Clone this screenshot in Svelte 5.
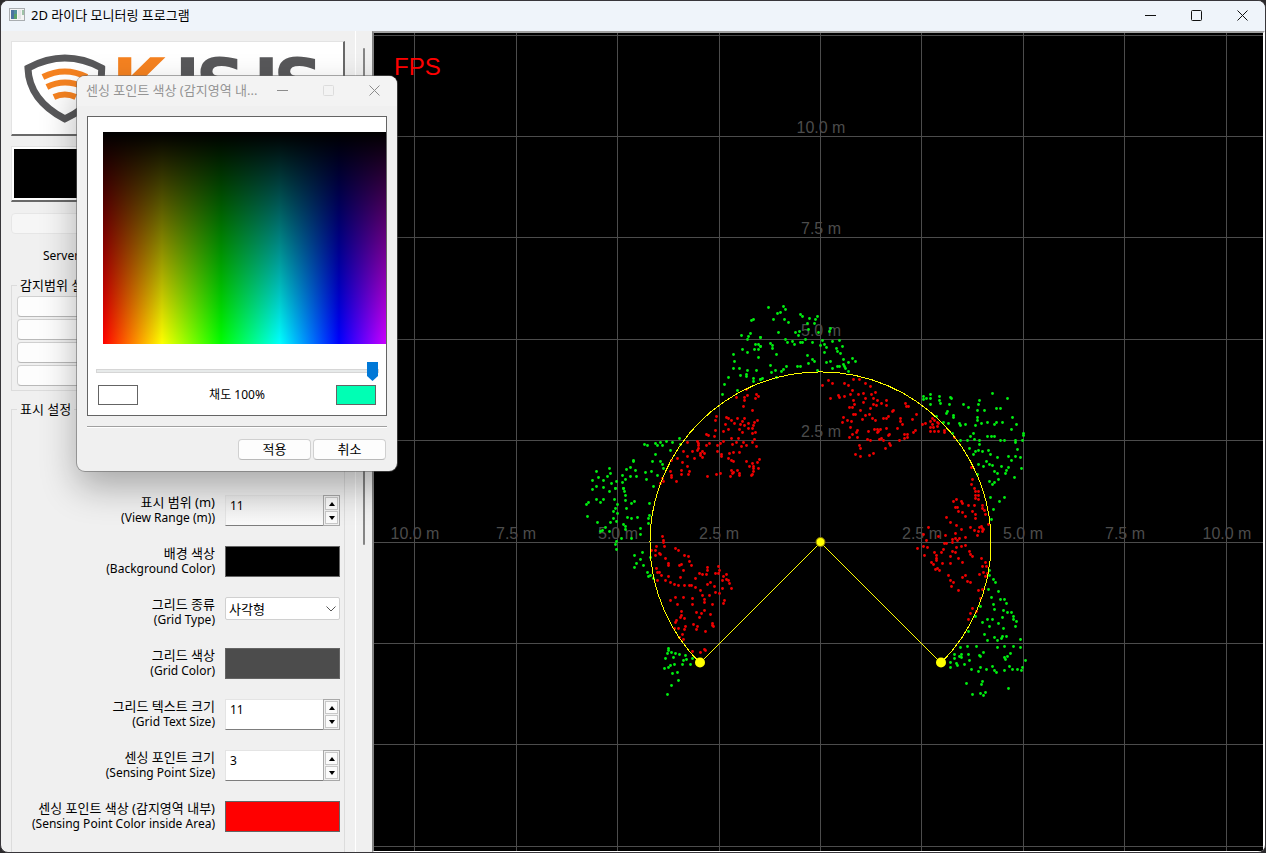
<script>
  // Scan samples: each sector lists "x,y" pairs in thirds of a pixel from its origin.
  const sectors = [
    {
      x: 570, y: 290,
      outside: '545,91 551,87 515,137 534,138 540,131 531,149 571,143 517,179 531,188 557,163 565,162 552,179 565,177 572,170 566,201 491,194 494,214 491,236 507,234 533,241 558,241 511,257 528,252 528,259 475,263 463,283 457,312 503,302 549,266 550,275 571,269 577,265 327,444 332,463 306,456 288,454 270,456 257,459 262,465 277,467 302,480 222,464 233,466 256,493 246,514 272,514 278,522 281,536 263,556 190,510 190,515 180,532 196,542 168,538 225,547 244,545 157,556 181,560 200,560 229,567 166,568 158,577 138,573 125,580 118,535 120,550 111,559 79,545 86,562 99,570 66,572 79,590 99,592 136,594 159,594 249,590',
      inside: '529,298 558,314 564,320 555,326 499,323 522,321 533,317 524,331 521,350 546,362 440,378 435,392 469,382 475,384 501,386 522,385 485,392 494,400 516,394 563,390 467,404 510,404 524,406 536,399 552,397 551,405 476,419 509,417 536,414 547,414 459,423 435,421 518,426 557,426 547,430 409,433 416,436 432,440 485,446 505,444 554,448 352,456 383,453 384,460 386,467 386,474 410,466 419,459 441,467 452,461 460,454 486,462 500,458 521,457 546,457 513,469 529,465 560,469 339,484 367,485 383,482 397,484 403,491 391,496 396,502 390,490 443,483 453,493 454,500 478,491 489,486 509,486 323,506 353,500 373,504 304,512 337,518 474,506 485,510 489,515 529,513 567,509 563,518 548,520 538,528 549,528 351,530 333,540 357,543 301,543 303,555 304,562 333,553 354,552 452,549 438,554 411,559 484,541 491,547 502,541 487,549 508,549 508,556 482,559 550,536 565,536 550,545 548,552 545,557 319,574 278,566 280,574 272,581'
    },
    {
      x: 570, y: 480,
      outside: '68,29 117,33 163,34 137,24 160,24 165,47 79,57 100,57 132,57 165,60 56,67 50,74 91,67 141,72 194,64 183,71 239,71 170,84 137,85 131,94 143,99 51,108 129,114 173,112 183,116 201,113 239,106 235,115 236,131 83,126 122,126 138,124 161,134 165,140 107,141 98,150 90,155 119,153 212,146 212,162 166,149 155,176 183,174 138,184 137,192 140,208 194,226 217,216 210,237 198,251 194,262 221,255 240,231 231,277 241,286 234,290 251,295 294,504 295,512 303,516 291,521 315,521 328,524 286,535 310,532 347,527 348,537 340,540 366,534 361,553 336,552 313,552 300,555 296,562 284,565 307,581 321,577 324,600 304,616 291,642',
      inside: '277,168 279,180 281,187 284,200 258,199 245,210 257,211 267,219 272,223 256,227 287,235 315,204 325,212 343,227 355,229 359,244 364,255 295,249 295,256 329,257 335,253 340,271 260,266 261,277 267,278 274,287 295,288 262,300 286,300 301,307 313,313 326,317 343,316 331,292 357,317 364,317 377,321 377,296 389,281 397,283 409,283 412,263 412,272 446,259 448,270 435,281 446,281 460,290 468,284 458,301 470,298 475,302 478,311 484,324 458,324 420,307 413,314 432,320 390,332 437,336 449,340 397,346 417,347 404,357 404,367 462,360 461,370 366,355 340,351 317,353 302,361 322,372 366,374 427,373 403,390 394,399 378,398 387,412 420,404 335,395 335,405 332,413 342,416 320,420 316,428 369,434 383,439 379,447 427,430 427,436 431,440 313,444 326,446 345,440 343,449 336,462 328,471 340,478 406,454 390,518 366,514 402,509 407,512'
    },
    {
      x: 760, y: 290,
      outside: '26,52 71,49 76,58 52,70 61,67 41,89 74,89 86,98 122,72 126,78 148,84 172,80 166,88 142,100 163,100 146,119 56,128 107,128 119,125 115,137 176,128 207,123 212,115 2,143 2,170 77,147 81,157 97,153 102,164 30,160 37,165 37,175 120,157 126,156 135,148 157,157 186,150 192,162 180,167 198,171 218,155 237,150 194,187 229,175 231,183 247,170 242,189 48,192 141,195 146,219 157,209 163,213 199,218 211,214 249,208 276,205 287,214 265,216 250,222 255,234 254,230 232,230 216,234 238,228 264,243 171,240 113,228 122,229 31,227 35,246 46,241 65,243 71,239 80,230 50,261 2,269',
      inside: '205,270 187,287 217,281 281,267 297,269 253,280 265,287 316,280 330,288 276,302 270,312 254,320 234,316 239,323 211,324 296,314 310,311 335,312 345,306 315,324 341,324 280,331 310,337 353,331 379,331 341,343 350,346 363,340 379,346 282,344 268,353 277,353 300,360 331,356 279,373 286,372 315,375 327,374 397,365 401,360 336,386 346,390 306,388 371,386 380,386 385,380 420,386 420,394 428,404 251,383 262,391 274,393 247,397 272,412 277,432 288,426 293,421 268,443 293,443 324,423 342,418 351,418 361,419 351,427 354,424 380,414 412,415 384,436 389,432 433,434 441,433 441,441 433,444 418,450 322,447 331,452 358,448 365,445 370,450 387,459 391,466 375,474 297,467 300,476 285,492 300,498 329,495 339,491 437,341 438,349 446,350'
    },
    {
      x: 900, y: 370,
      outside: '277,70 90,72 70,79 78,84 71,88 90,86 118,78 117,90 120,99 90,103 150,83 155,84 147,103 190,103 204,111 239,90 234,103 322,84 290,114 301,114 232,122 252,122 142,124 139,129 161,136 161,142 337,141 110,140 232,141 233,151 129,158 145,161 179,161 182,165 197,162 243,161 261,156 284,163 290,157 306,157 348,164 334,177 225,167 158,190 220,189 370,189 370,197 210,199 261,198 274,198 283,200 224,208 180,211 201,210 237,210 302,211 314,211 345,210 347,217 368,211 237,224 207,235 352,237 265,241 247,245 227,243 236,241 270,254 221,253 293,262 326,260 345,259 362,262 335,271 260,274 235,283 268,283 276,287 249,289 305,290 326,292 363,294 284,305 292,310 319,301 315,310 232,312 342,323 294,327 267,333 284,336 278,342 270,382 314,383 297,395 281,419 273,448',
      inside: '50,134 36,149 68,162 77,161 98,146 102,151 91,155 112,158 115,161 98,162 112,169 101,172 90,171 91,184 102,184 114,183 134,180 134,186 45,180 41,187 163,201 213,291 217,329 213,344 224,354 225,365 236,364 227,377 235,377 227,386 236,387 168,389 184,393 187,400 159,395 206,406 223,407 247,405 165,411 172,412 248,414 253,422 217,423 227,432 256,434 175,424 188,427 197,439 139,441 225,444 152,458 169,466 266,463 211,471 239,472 245,469 246,476 250,479 85,471 185,479 222,482 236,485 248,485 165,490 136,496 233,496 195,502 167,504 116,499 71,494'
    },
    {
      x: 900, y: 530,
      outside: '267,121 269,137 281,149 286,158 264,178 296,184 273,202 302,208 312,209 319,220 279,222 242,229 283,239 310,240 323,247 335,246 227,260 262,268 277,268 306,261 341,259 341,267 348,274 296,280 347,289 248,277 268,290 310,294 204,303 252,312 282,321 307,318 304,326 320,320 261,331 292,331 361,329 181,351 202,349 230,350 291,352 314,350 340,349 361,352 163,372 163,385 178,379 184,374 184,382 206,374 209,391 249,367 238,375 241,379 332,369 322,378 313,382 316,387 377,391 151,398 152,411 170,400 171,407 192,404 241,412 214,418 234,423 259,418 277,409 284,421 288,427 314,420 329,409 337,418 351,418 367,411 364,422 200,461 247,455 244,462 218,492 240,490 257,487 251,496 326,474',
      inside: '78,30 171,32 178,24 133,39 138,41 158,36 157,27 53,55 70,49 82,52 131,57 170,53 184,50 195,47 72,77 104,67 108,76 110,85 124,68 156,65 167,68 151,79 209,65 210,73 216,79 95,96 101,102 109,90 127,99 151,99 176,86 187,97 245,86 257,98 248,110 259,110 106,118 117,122 113,114 249,126 238,134 257,140 261,131 144,136 151,151 160,158 155,170 175,180 188,143 197,135 202,154 210,157 236,180 247,177 242,206 217,236 228,243 211,250 205,268'
    }
  ];

  const toPoints = (key) =>
    sectors.flatMap((s) =>
      s[key].split(' ').map((pair) => {
        const [px, py] = pair.split(',').map(Number);
        return { x: Math.round(s.x + px / 3 - 0.5) + 0.5, y: Math.round(s.y + py / 3 - 0.5) + 0.5 };
      })
    );

  const outsidePoints = toPoints('outside');
  const insidePoints = toPoints('inside');

  const columns = [414, 516, 617, 719, 820, 921, 1023, 1124, 1226];
  const lines = [35, 136, 237, 339, 440, 542, 643, 744, 846];
  const across = [
    [415, '10.0 m'], [516, '7.5 m'], [618, '5.0 m'], [719, '2.5 m'],
    [922, '2.5 m'], [1023, '5.0 m'], [1125, '7.5 m'], [1227, '10.0 m']
  ];
  const upward = [[136, '10.0 m'], [237, '7.5 m'], [339, '5.0 m'], [440, '2.5 m']];

  const settings = [
    { id: 'range', ko: '표시 범위 (m)', en: '(View Range (m))', kind: 'spin', value: '11' },
    { id: 'bg', ko: '배경 색상', en: '(Background Color)', kind: 'color', value: '#000000' },
    { id: 'grid', ko: '그리드 종류', en: '(Grid Type)', kind: 'select', value: '사각형' },
    { id: 'gridcolor', ko: '그리드 색상', en: '(Grid Color)', kind: 'color', value: '#4c4c4c' },
    { id: 'gridtext', ko: '그리드 텍스트 크기', en: '(Grid Text Size)', kind: 'spin', value: '11' },
    { id: 'pointsize', ko: '센싱 포인트 크기', en: '(Sensing Point Size)', kind: 'spin', value: '3' },
    { id: 'pointcolor', ko: '센싱 포인트 색상 (감지영역 내부)', en: '(Sensing Point Color inside Area)', kind: 'color', value: '#ff0000' }
  ];
</script>

<div class="window">
  <header class="titlebar">
    <svg class="appicon" viewBox="0 0 16 14" aria-hidden="true">
      <rect x="0.5" y="0.5" width="15" height="12" fill="#f4f4f4" stroke="#a9adb0" />
      <rect x="2" y="2" width="6" height="9" fill="#4f8f9a" />
      <rect x="2" y="2" width="3" height="9" fill="#4a72a0" />
      <rect x="5" y="6" width="3" height="5" fill="#58a06a" />
      <rect x="9" y="2" width="3" height="9" fill="#e2e4e6" />
      <rect x="13" y="2" width="2" height="5" fill="#9fc3a8" />
    </svg>
    <h1>2D 라이다 모니터링 프로그램</h1>
    <div class="controls">
      <button aria-label="최소화"><svg viewBox="0 0 11 11"><path d="M0 5.5h11" /></svg></button>
      <button aria-label="최대화"><svg viewBox="0 0 11 11"><rect x="0.5" y="0.5" width="10" height="10" rx="1" /></svg></button>
      <button aria-label="닫기"><svg viewBox="0 0 11 11"><path d="M0.5 0.5l10 10M10.5 0.5l-10 10" /></svg></button>
    </div>
  </header>

  <div class="body">
    <aside>
      <div class="panel">
        <div class="logo">
          <svg viewBox="0 0 332 92" aria-hidden="true">
            <path d="M16 26 Q35 16 53 16 Q72 16 90 26 Q91 59 53 77 Q17 58 16 26Z" fill="none" stroke="#58585a" stroke-width="7" />
            <g fill="none" stroke="#f58220" stroke-width="6">
              <path d="M31 35 Q53 24 75 35" />
              <path d="M35 45 Q53 36 72 45" />
              <path d="M42 55 Q53 50 64 55" />
            </g>
            <text y="66" class="brand" x="100 163 184 242 262"><tspan fill="#f58220">K</tspan><tspan fill="#58585a">ISIS</tspan></text>
          </svg>
        </div>
        <div class="display"></div>
        <button class="push idle" disabled aria-label="연결"></button>
        <p class="server">Server</p>

        <fieldset class="area">
          <legend>감지범위 설정</legend>
          {#each [1, 2, 3, 4] as n}
            <button class="push" aria-label={`감지범위 ${n}`}></button>
          {/each}
        </fieldset>

        <fieldset class="view">
          <legend>표시 설정</legend>
          {#each settings as s}
            <div class="row">
              <label for={s.id}><span>{s.ko}</span><small>{s.en}</small></label>
              {#if s.kind === 'spin'}
                <div class="spin">
                  <input id={s.id} type="text" value={s.value} />
                  <div class="steps">
                    <button aria-label="증가"><svg viewBox="0 0 6 4"><path d="M0 4L3 0L6 4Z" /></svg></button>
                    <button aria-label="감소"><svg viewBox="0 0 6 4"><path d="M0 0L3 4L6 0Z" /></svg></button>
                  </div>
                </div>
              {:else if s.kind === 'select'}
                <div class="combo">
                  <select id={s.id}><option>{s.value}</option></select>
                  <svg viewBox="0 0 10 6" aria-hidden="true"><path d="M0.5 0.5L5 5L9.5 0.5" /></svg>
                </div>
              {:else}
                <button id={s.id} class="swatch" style:background={s.value}></button>
              {/if}
            </div>
          {/each}
        </fieldset>
      </div>
      <div class="scroll"><div class="bar"></div></div>
    </aside>

    <main>
      <svg viewBox="374 33 889 818" preserveAspectRatio="xMidYMid slice" role="img" aria-label="라이다 화면">
        <g fill="#4c4c4c">
          {#each columns as x}<rect {x} y="33" width="1" height="818" />{/each}
          {#each lines as y}<rect x="374" {y} width="890" height="1" />{/each}
        </g>
        <g class="scale">
          {#each across as [x, label]}<text {x} y="539">{label}</text>{/each}
          {#each upward as [y, label]}<text x="821" y={y - 3}>{label}</text>{/each}
        </g>
        <g fill="#00ee10">
          {#each outsidePoints as p}<circle cx={p.x} cy={p.y} r="1.4" />{/each}
        </g>
        <g fill="#f00000">
          {#each insidePoints as p}<circle cx={p.x} cy={p.y} r="1.4" />{/each}
        </g>
        <path d="M700 663A170.5 170.5 0 1 1 941 663L820.5 542.5Z" fill="none" stroke="#ffff00" shape-rendering="crispEdges" />
        <g fill="#ffff00">
          <circle cx="820.5" cy="542" r="4.5" stroke="#807000" />
          <circle cx="700" cy="662.5" r="5" />
          <circle cx="941" cy="662.5" r="5" />
        </g>
        <text class="fps" x="394" y="75">FPS</text>
      </svg>
    </main>
  </div>

  <section class="dialog" aria-label="센싱 포인트 색상">
    <header>
      <h2>센싱 포인트 색상 (감지영역 내...</h2>
      <div class="controls">
        <button aria-label="최소화"><svg viewBox="0 0 11 11"><path d="M0 5.5h11" /></svg></button>
        <button aria-label="최대화" disabled><svg viewBox="0 0 11 11"><rect x="0.5" y="0.5" width="10" height="10" rx="1" /></svg></button>
        <button aria-label="닫기"><svg viewBox="0 0 11 11"><path d="M0.5 0.5l10 10M10.5 0.5l-10 10" /></svg></button>
      </div>
    </header>
    <div class="picker">
      <div class="spectrum"></div>
      <input type="range" min="0" max="100" value="100" aria-label="채도" />
      <div class="result">
        <span class="chip"></span>
        <output>채도 100%</output>
        <span class="chip mint"></span>
      </div>
    </div>
    <hr />
    <footer>
      <button class="push">적용</button>
      <button class="push">취소</button>
    </footer>
  </section>
</div>

<style>
  :global(body) { background: #2b2a2c; }
  .window, .window * { box-sizing: border-box; }
  .window {
    position: relative;
    display: flex;
    flex-direction: column;
    height: 100vh;
    overflow: hidden;
    border: 1px solid #38363a;
    border-radius: 8px;
    background: #f0f0f0;
    color: #000;
    font: 12px/16px "Noto Sans", "Noto Sans CJK KR", sans-serif;
  }
  button, input, select { font: inherit; color: inherit; margin: 0; padding: 0; border: 0; background: none; }
  h1, h2, p { margin: 0; font: inherit; }

  .titlebar { display: flex; align-items: center; flex: none; height: 30px; padding: 0 0 2px 8px; background: #eff4fa; }
  .appicon { width: 16px; height: 14px; margin-right: 6px; }
  h1, h2 { flex: 1; font-size: 13px; line-height: 18px; white-space: nowrap; }
  .controls { display: flex; align-self: stretch; }
  .controls button { display: grid; place-items: center; width: 46px; }
  .controls svg { width: 11px; height: 11px; fill: none; stroke: #111; }

  .body { display: flex; flex: 1; min-height: 0; }
  aside { display: flex; flex: none; width: 371px; overflow: hidden; }
  .panel { width: 355px; padding: 10px 10px 0; border-right: 1px solid #fff; }
  .logo { height: 95px; background: #fff; border: 1px solid #e3e3e3; border-right: 2px solid #696969; border-bottom: 2px solid #696969; }
  .logo svg { display: block; width: 100%; height: 100%; overflow: hidden; }
  .brand { font: bold 70px "DejaVu Sans", sans-serif; }
  .display { height: 56px; margin-top: 10px; padding: 2px 2px 1px; background: #000 content-box; border: 1px solid #e3e3e3; border-bottom: 2px solid #696969; box-shadow: inset 0 0 0 2px #fff; }
  .push { display: block; height: 21px; background: #fdfdfd; border: 1px solid #d0d0d0; border-bottom-color: #b9b9b9; border-radius: 4px; }
  .idle { width: 100%; margin-top: 11px; background: #f6f6f6; border-color: #e6e6e6; }
  .server { margin: 14px 0 0 32px; }

  fieldset { min-width: 0; margin: 0; border: 1px solid #dcdcdc; }
  legend { padding: 0 3px; font-size: 13px; line-height: 16px; }
  .area { display: flex; flex-direction: column; gap: 2px; margin-top: 13px; padding: 3px 5px 4px; }
  .area .push { width: 100%; }
  .view { margin-top: 10px; padding: 78px 4px 30px; }
  .view legend { margin-left: 1px; }

  .row { display: flex; justify-content: flex-end; gap: 10px; height: 31px; margin-bottom: 20px; }
  label { display: block; text-align: right; white-space: nowrap; }
  label span, label small { display: block; line-height: 15px; }
  label span { font-size: 13px; }
  label small { font-size: 12px; }
  .swatch { width: 115px; border: 1px solid #646464; }
  .spin { display: flex; width: 115px; }
  .spin input { flex: 1; min-width: 0; padding: 0 4px 10px; background: #fff; border: 1px solid #e4e4e4; border-right: 0; border-bottom: 1px solid #7d7d7d; }
  .row:first-of-type .spin input { background: linear-gradient(#ebebeb, #fafafa); }
  .steps { display: flex; flex-direction: column; gap: 1px; width: 17px; padding: 1px; border: 1px solid #a8a8a8; background: #f0f0f0; }
  .steps button { display: grid; place-items: center; flex: 1; border: 1px solid #c8c8c8; background: #fbfbfb; }
  .steps svg { width: 6px; height: 4px; }
  .combo { display: grid; width: 115px; height: 23px; }
  .combo select { grid-area: 1 / 1; appearance: none; padding-left: 3px; font-size: 13px; background: #fff; border: 1px solid #d0d0d0; border-radius: 2px; }
  .combo svg { grid-area: 1 / 1; place-self: center end; width: 10px; height: 6px; margin-right: 4px; fill: none; stroke: #555; pointer-events: none; }

  .scroll { flex: 1; padding: 17px 0 0 7px; }
  .bar { width: 2px; height: 497px; background: #858585; border-radius: 1px; }

  main { flex: 1; min-width: 0; background: #000; border-style: solid; border-width: 2px 2px 1px 2px; border-color: #a0a0a0 #fff #fff #828282; }
  main svg { display: block; width: 100%; height: 100%; }
  .scale { font: 16px "Liberation Sans", Arial, sans-serif; fill: #4c4c4c; text-anchor: middle; }
  .fps { font: 24px "Liberation Sans", Arial, sans-serif; fill: #f00; }

  .dialog {
    position: absolute;
    left: 76px;
    top: 75px;
    width: 320px;
    padding: 0 10px 11px;
    background: #f0f0f0;
    border-radius: 8px;
    box-shadow: 0 0 0 1px rgba(100, 100, 100, 0.55), 0 16px 36px rgba(0, 0, 0, 0.3);
  }
  .dialog header { display: flex; height: 30px; margin: 0 -10px; padding: 0 0 2px 9px; border-radius: 8px 8px 0 0; background: #f3f3f3; color: #949494; }
  .dialog h2 { align-self: center; }
  .dialog .controls svg { stroke: #8c8c8c; }
  .dialog .controls button:disabled svg { stroke: #dcdcdc; }
  .picker { margin-top: 10px; padding: 15px 0 10px; background: #fff; border: 1px solid #646464; }
  .spectrum {
    height: 212px;
    margin-left: 15px;
    background:
      linear-gradient(#000, transparent),
      linear-gradient(90deg, #f00 0, #ff0 59px, #0f0 118px, #0ff 177px, #00f 236px, #f0f 295px);
  }
  input[type='range'] { display: block; appearance: none; width: 283px; height: 20px; margin: 17px 0 0 8px; }
  input[type='range']::-webkit-slider-runnable-track { height: 4px; background: #e7eaea; border: 1px solid #d6d6d6; }
  input[type='range']::-webkit-slider-thumb { appearance: none; width: 11px; height: 19px; margin-top: -8px; background: #0078d7; clip-path: polygon(0 0, 100% 0, 100% 74%, 50% 100%, 0 74%); }
  .result { display: flex; align-items: center; justify-content: space-between; margin-top: 4px; padding: 0 10px; }
  .chip { width: 40px; height: 20px; border: 1px solid #646464; background: #fff; }
  .mint { background: #00ffb4; }
  hr { height: 2px; margin: 10px 0 0; border: 0; border-top: 1px solid #a0a0a0; background: #fff; }
  footer { display: flex; justify-content: flex-end; gap: 2px; margin-top: 11px; padding-right: 1px; }
  footer .push { width: 73px; font-size: 13px; line-height: 17px; }
</style>
